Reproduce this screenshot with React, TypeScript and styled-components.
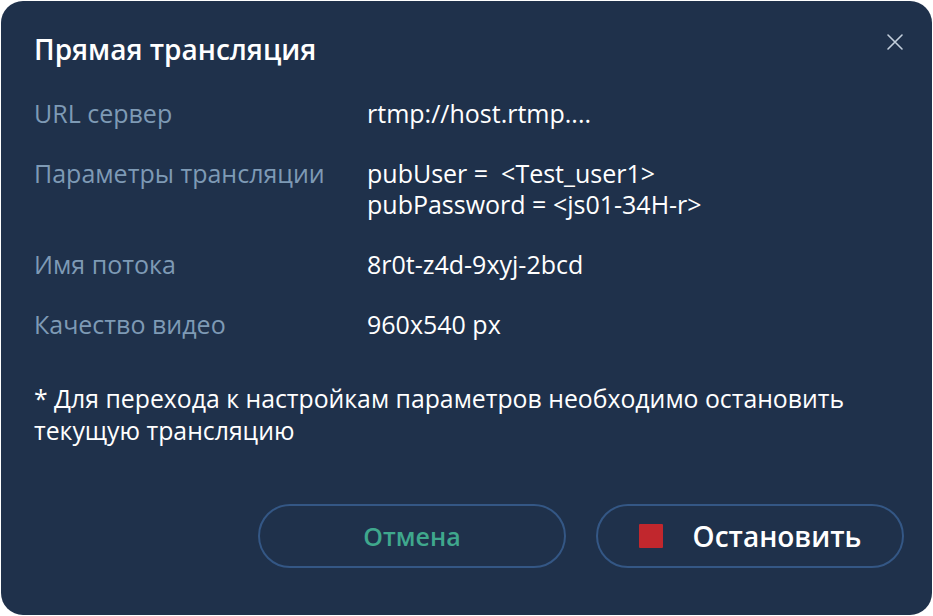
import styled, { createGlobalStyle } from "styled-components";

const GlobalStyle = createGlobalStyle`
  html, body {
    margin: 0;
    padding: 0;
    background: #ffffff;
  }
  body {
    font-family: "Open Sans", "Noto Sans", sans-serif;
  }
`;

const rows = [
  { label: "URL сервер", value: ["rtmp://host.rtmp...."] },
  {
    label: "Параметры трансляции",
    value: ["pubUser =  <Test_user1>", "pubPassword = <js01-34H-r>"],
  },
  { label: "Имя потока", value: ["8r0t-z4d-9xyj-2bcd"] },
  { label: "Качество видео", value: ["960x540 px"] },
];

export default function App() {
  return (
    <>
      <GlobalStyle />
      <Screen>
        <Dialog>
          <Header>
            <Title>Прямая трансляция</Title>
            <CloseButton aria-label="Закрыть">
              <svg width="18" height="18" viewBox="0 0 18 18">
                <path d="M2 2L16 16M16 2L2 16" stroke="#c3cfdc" strokeWidth="1.6" strokeLinecap="round" />
              </svg>
            </CloseButton>
          </Header>
          <Fields>
            {rows.map((r) => (
              <Row key={r.label}>
                <Label>{r.label}</Label>
                <Value>
                  {r.value.map((v) => (
                    <div key={v}>{v}</div>
                  ))}
                </Value>
              </Row>
            ))}
          </Fields>
          <Note>
            * Для перехода к настройкам параметров необходимо остановить текущую трансляцию
          </Note>
          <Actions>
            <PillButton $tone="cancel">Отмена</PillButton>
            <PillButton $tone="stop">
              <StopMark />
              Остановить
            </PillButton>
          </Actions>
        </Dialog>
      </Screen>
    </>
  );
}

const Screen = styled.div`
  width: 933px;
  height: 616px;
  padding: 1px;
  box-sizing: border-box;
`;

const Dialog = styled.div`
  width: 100%;
  height: 100%;
  box-sizing: border-box;
  background: #1f314b;
  border-radius: 22px;
  padding: 29px 28px 0 33px;
  color: #ffffff;
  display: flex;
  flex-direction: column;
`;

const Header = styled.div`
  display: flex;
  justify-content: space-between;
  align-items: flex-start;
`;

const Title = styled.h1`
  margin: 0;
  font-size: 28px;
  font-weight: 600;
  line-height: 38px;
  color: #ffffff;
`;

const CloseButton = styled.button`
  background: none;
  border: none;
  padding: 0;
  margin: 3px 0 0 0;
  cursor: pointer;
  display: flex;
`;

const Fields = styled.div`
  display: flex;
  flex-direction: column;
  gap: 29px;
  margin-top: 30px;
`;

const Row = styled.div`
  display: grid;
  grid-template-columns: 333px 1fr;
  font-size: 25px;
  line-height: 31px;
`;

const Label = styled.div`
  color: #7e9ab5;
`;

const Value = styled.div`
  color: #ffffff;
  white-space: pre;
`;

const Note = styled.p`
  margin: 42px 0 0;
  font-size: 24.8px;
  line-height: 32px;
  color: #ffffff;
  max-width: 850px;
`;

const Actions = styled.div`
  display: flex;
  justify-content: flex-end;
  gap: 30px;
  margin-top: 58px;
`;

const PillButton = styled.button<{ $tone: "cancel" | "stop" }>`
  width: 308px;
  height: 64px;
  border-radius: 32px;
  border: 2px solid #345785;
  background: transparent;
  display: flex;
  align-items: center;
  justify-content: center;
  gap: 30px;
  font-family: inherit;
  font-size: ${(p) => (p.$tone === "stop" ? "28px" : "25px")};
  font-weight: 600;
  color: ${(p) => (p.$tone === "stop" ? "#ffffff" : "#3fa88d")};
  cursor: pointer;
`;

const StopMark = styled.span`
  width: 24px;
  height: 24px;
  background: #c1272d;
  border-radius: 1px;
`;
